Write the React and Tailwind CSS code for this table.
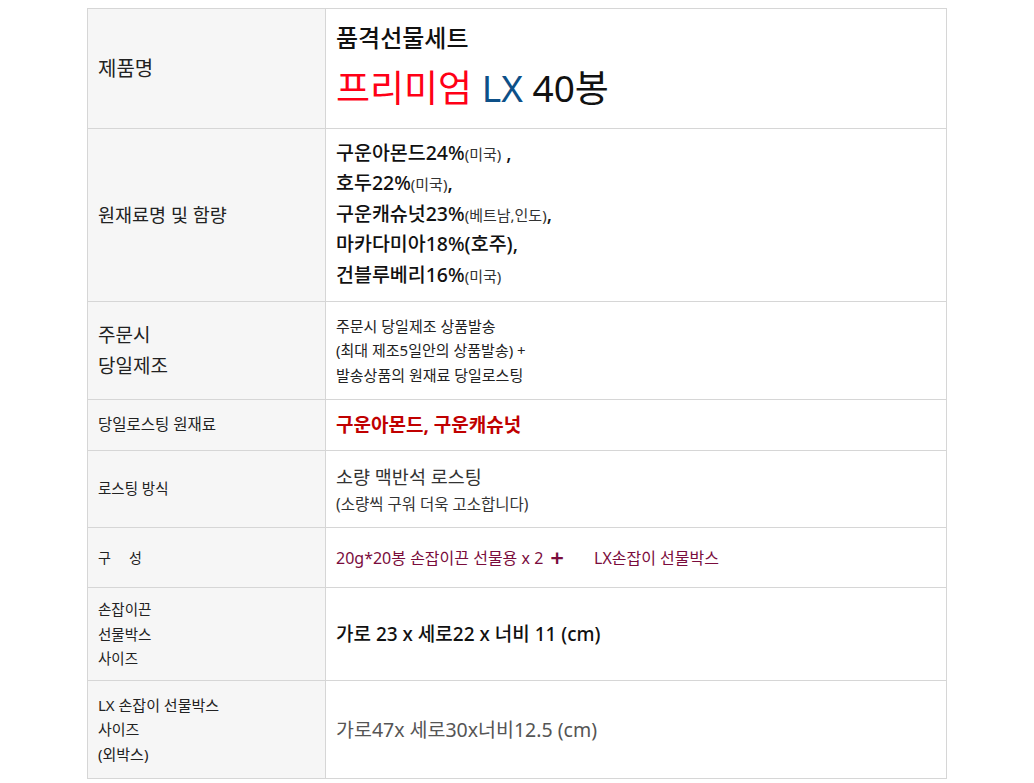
const font = { fontFamily: '"Noto Sans", "Noto Sans CJK KR", sans-serif' };

const Row = ({ label, height, last, children }) => {
  return (
    <div
      className={`flex border-t border-[#d6d6d6] ${last ? "border-b" : ""} ${height}`}
    >
      <div className="flex w-[238px] shrink-0 items-center border-r border-[#d6d6d6] bg-[#f6f6f6] px-[10px] text-[#222]">
        {label}
      </div>
      <div className="flex flex-1 items-center px-[10px]">{children}</div>
    </div>
  );
};

const Ingredient = ({ name, origin, tail }) => (
  <p className="h-[30.5px] text-[19.5px] font-medium leading-[30.5px] text-[#111]">
    {name}
    <span className="text-[15px] font-normal text-[#333]">{origin}</span>
    {tail}
  </p>
);

const App = () => {
  return (
    <div className="min-h-[783px] bg-white pt-[8px]" style={font}>
      <div className="ml-[87px] w-[860px] border-x border-[#d6d6d6]">
        <Row
          height="h-[120px]"
          label={<span className="text-[20px]">제품명</span>}
        >
          <div className="-mt-[3px]">
            <p className="h-[30px] text-[24px] font-medium leading-[30px] text-[#111]">
              품격선물세트
            </p>
            <p className="mt-[12px] h-[46px] text-[37px] leading-[46px]">
              <span className="text-[#ff0016]">프리미엄</span>{" "}
              <span className="text-[#0d5088]">LX</span>{" "}
              <span className="text-[#111]">40봉</span>
            </p>
          </div>
        </Row>

        <Row
          height="h-[173px]"
          label={<span className="text-[18.5px]">원재료명 및 함량</span>}
        >
          <div className="-mt-[2px]">
            <Ingredient name="구운아몬드24%" origin="(미국)" tail=" ," />
            <Ingredient name="호두22%" origin="(미국)" tail="," />
            <Ingredient name="구운캐슈넛23%" origin="(베트남,인도)" tail="," />
            <p className="h-[30.5px] text-[19.5px] font-medium leading-[30.5px] text-[#111]">
              마카다미아18%(호주),
            </p>
            <Ingredient name="건블루베리16%" origin="(미국)" tail="" />
          </div>
        </Row>

        <Row
          height="h-[98px]"
          label={
            <div className="text-[19px] leading-[31px]">
              <p>주문시</p>
              <p>당일제조</p>
            </div>
          }
        >
          <div className="text-[15px] leading-[24.5px] text-[#222]">
            <p>주문시 당일제조 상품발송</p>
            <p>(최대 제조5일안의 상품발송) +</p>
            <p>발송상품의 원재료 당일로스팅</p>
          </div>
        </Row>

        <Row
          height="h-[51px]"
          label={<span className="text-[15.5px]">당일로스팅 원재료</span>}
        >
          <p className="text-[19px] font-bold text-[#c00000]">
            구운아몬드, 구운캐슈넛
          </p>
        </Row>

        <Row
          height="h-[77px]"
          label={<span className="text-[14.5px]">로스팅 방식</span>}
        >
          <div className="text-[#333]">
            <p className="text-[18.5px] leading-[28px]">소량 맥반석 로스팅</p>
            <p className="mt-[2px] text-[15.5px] leading-[22px]">
              (소량씩 구워 더욱 고소합니다)
            </p>
          </div>
        </Row>

        <Row
          height="h-[60px]"
          label={
            <span className="whitespace-pre text-[14px]">구{"     "}성</span>
          }
        >
          <p className="flex items-center text-[16px] text-[#7a0c3c]">
            <span>20g*20봉 손잡이끈 선물용 x 2</span>
            <span className="ml-[7px] text-[24px] font-semibold leading-none">+</span>
            <span className="ml-[30px]">LX손잡이 선물박스</span>
          </p>
        </Row>

        <Row
          height="h-[93px]"
          label={
            <div className="text-[14.5px] leading-[24.5px]">
              <p>손잡이끈</p>
              <p>선물박스</p>
              <p>사이즈</p>
            </div>
          }
        >
          <p className="text-[19px] font-medium text-[#111]">
            가로 23 x 세로22 x 너비 11 (cm)
          </p>
        </Row>

        <Row
          height="h-[99px]"
          last
          label={
            <div className="text-[15px] leading-[24.5px]">
              <p>LX 손잡이 선물박스</p>
              <p>사이즈</p>
              <p>(외박스)</p>
            </div>
          }
        >
          <p className="text-[19.5px] text-[#555]">가로47x 세로30x너비12.5 (cm)</p>
        </Row>
      </div>
    </div>
  );
};

export default App;
